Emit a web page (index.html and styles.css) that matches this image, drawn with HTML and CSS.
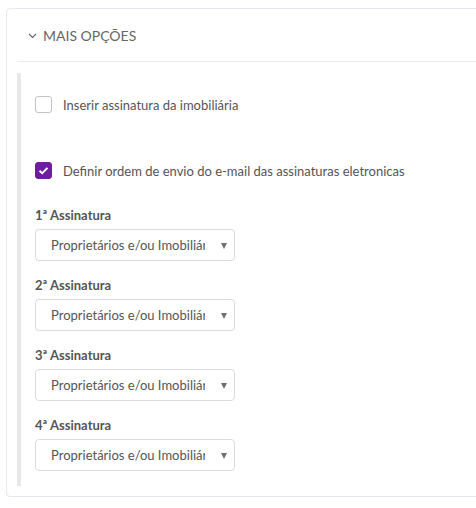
FILE: index.html
```html
<!DOCTYPE html>
<html lang="pt-BR">
<head>
<meta charset="utf-8">
<title>Mais opções</title>
<link rel="stylesheet" href="styles.css">
</head>
<body>
<div class="page">
  <div class="card">
    <div class="card-header">
      <svg class="chev" width="9" height="6" viewBox="0 0 9 6"><polyline points="1,1 4.5,4.5 8,1" fill="none" stroke="#666" stroke-width="1.2"/></svg>
      <span class="title">MAIS OPÇÕES</span>
    </div>
    <div class="card-body">
      <div class="section">
        <label class="check-row first">
          <span class="box"></span>
          <span class="check-text">Inserir assinatura da imobiliária</span>
        </label>
        <label class="check-row">
          <span class="box checked"><svg width="11" height="9" viewBox="0 0 11 9"><polyline points="1.5,4.8 4.2,7.2 9.5,1.8" fill="none" stroke="#fff" stroke-width="1.9"/></svg></span>
          <span class="check-text">Definir ordem de envio do e-mail das assinaturas eletronicas</span>
        </label>
        <div class="field">
          <div class="field-label">1ª Assinatura</div>
          <div class="select"><span class="select-text">Proprietários e/ou Imobiliária</span><span class="arrow"></span></div>
        </div>
        <div class="field">
          <div class="field-label">2ª Assinatura</div>
          <div class="select"><span class="select-text">Proprietários e/ou Imobiliária</span><span class="arrow"></span></div>
        </div>
        <div class="field">
          <div class="field-label">3ª Assinatura</div>
          <div class="select"><span class="select-text">Proprietários e/ou Imobiliária</span><span class="arrow"></span></div>
        </div>
        <div class="field last">
          <div class="field-label">4ª Assinatura</div>
          <div class="select"><span class="select-text">Proprietários e/ou Imobiliária</span><span class="arrow"></span></div>
        </div>
      </div>
    </div>
  </div>
</div>
</body>
</html>
```
FILE: styles.css
```css
html, body {
  margin: 0;
  padding: 0;
  background: #fff;
  overflow: hidden;
}
body {
  font-family: Lato, "Open Sans", sans-serif;
  color: #555;
  width: 476px;
  height: 508px;
}
.page {
  padding: 8px 0 0 6px;
}
.card {
  width: 520px;
  border: 1px solid #e7e7ef;
  border-radius: 4px;
  box-sizing: border-box;
  padding-bottom: 10px;
}
.card-header {
  margin-left: 10px;
  height: 52px;
  border-bottom: 1px solid #ebebeb;
  display: flex;
  align-items: center;
  padding-left: 11px;
  gap: 6px;
}
.chev {
  display: block;
  margin-top: 1px;
}
.title {
  font-size: 14px;
  color: #666;
}
.card-body {
  padding: 11px 0 0 10px;
}
.section {
  border-left: 4px solid #e8e8e8;
  padding: 23px 0 15px 14px;
}
.check-row {
  display: flex;
  align-items: center;
  gap: 11px;
  height: 17px;
  font-size: 13px;
  color: #555;
}
.check-row.first {
  margin-bottom: 49px;
}
.box {
  width: 17px;
  height: 17px;
  box-sizing: border-box;
  border: 1px solid #c4c4c4;
  border-radius: 3px;
  display: flex;
  align-items: center;
  justify-content: center;
  flex: none;
}
.box.checked {
  background: #6f1ca0;
  border-color: #6f1ca0;
}
.box svg {
  display: block;
}
.field {
  margin-top: 27px;
}
.field + .field {
  margin-top: 15px;
}
.field-label {
  font-size: 13px;
  font-weight: bold;
  line-height: 18px;
  color: #555;
  margin-bottom: 5px;
}
.select {
  width: 200px;
  height: 32px;
  box-sizing: border-box;
  border: 1px solid #dcdcdc;
  border-radius: 4px;
  display: flex;
  align-items: center;
  padding-left: 15px;
  padding-right: 7px;
}
.select-text {
  width: 154px;
  overflow: hidden;
  white-space: nowrap;
  font-size: 13px;
  color: #555;
  flex: none;
}
.arrow {
  margin-left: auto;
  margin-top: 1px;
  width: 0;
  height: 0;
  border-left: 3px solid transparent;
  border-right: 3px solid transparent;
  border-top: 6px solid #707070;
}
```
